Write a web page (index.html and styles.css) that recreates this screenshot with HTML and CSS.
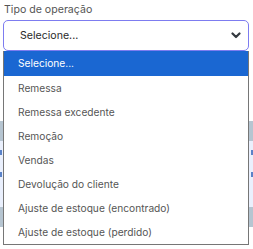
FILE: index.html
```html
<!DOCTYPE html>
<html>
<head>
<meta charset="utf-8">
<link rel="stylesheet" href="styles.css">
</head>
<body>
<div class="page">
  <label class="label">Tipo de operação</label>
  <div class="select">
    <span class="value">Selecione...</span>
    <svg class="chev" width="10" height="7" viewBox="0 0 10 7"><path d="M1.5 1.5 L5 5 L8.5 1.5" fill="none" stroke="#343a40" stroke-width="2.2" stroke-linecap="round" stroke-linejoin="round"/></svg>
  </div>
  <div class="table">
    <div class="thead"></div>
    <div class="trow"><i class="mark"></i><i class="mark"></i></div>
    <div class="trow"><i class="mark"></i><i class="mark"></i></div>
    <div class="trow"></div>
    <div class="tfoot"></div>
  </div>
  <ul class="dropdown">
    <li class="opt active">Selecione...</li>
    <li class="opt">Remessa</li>
    <li class="opt">Remessa excedente</li>
    <li class="opt">Remoção</li>
    <li class="opt">Vendas</li>
    <li class="opt">Devolução do cliente</li>
    <li class="opt">Ajuste de estoque (encontrado)</li>
    <li class="opt">Ajuste de estoque (perdido)</li>
  </ul>
</div>
</body>
</html>
```
FILE: styles.css
```css
* { box-sizing: border-box; }
html, body { margin: 0; padding: 0; background: #fff; }
body { font-family: Inter, "Open Sans", sans-serif; width: 253px; height: 249px; overflow: hidden; }
.page { position: relative; padding: 3px 0 0 0; }
.label { display: block; margin-left: 4px; font-size: 10.6px; line-height: 13px; color: #555; height: 17px; }
.select {
  margin-left: 3px; width: 246px; height: 31px;
  border: 1px solid #7d7cf0; border-radius: 5px;
  display: flex; align-items: center; justify-content: space-between;
  padding: 0 7px 0 16px;
}
.value { font-size: 10.6px; color: #2b2b2b; }
.chev { display: block; }
.table { margin-top: 70px; }
.thead { height: 20px; background: #b6c5d1; }
.trow { height: 22px; background: #eaf0fd; display: flex; justify-content: space-between; align-items: center; }
.mark { display: block; width: 2px; height: 5px; background: #5a82c8; }
.tfoot { height: 20px; background: #b6c5d1; }
.dropdown {
  position: absolute; left: 3px; top: 51px; width: 246px; height: 194px;
  margin: 0; padding: 0; list-style: none;
  background: #fff; border: 1px solid #767676; border-top: none;
}
.opt { height: 24px; line-height: 24px; padding-left: 14px; font-size: 10.2px; color: #555; }
.opt.active { background: #1a67d2; color: #fff; height: 25px; line-height: 25px; }
```
